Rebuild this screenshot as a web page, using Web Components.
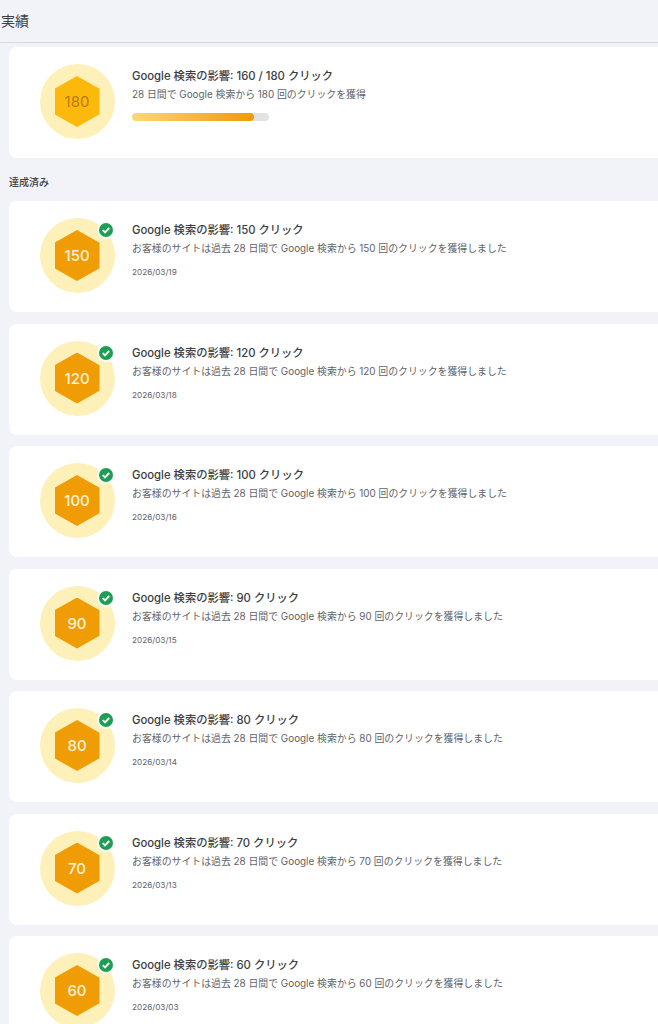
<!DOCTYPE html>
<html lang="ja">
<head>
<meta charset="utf-8">
<title>実績</title>
<style>
  html, body {
    margin: 0;
    background: #f1f3f9;
    overflow: hidden;
    font-family: "Inter", "Noto Sans CJK JP", sans-serif;
  }
</style>
</head>
<body>
<achievements-page></achievements-page>

<script>
(function () {
  const DONE = [
    ["150", "2026/03/19"],
    ["120", "2026/03/18"],
    ["100", "2026/03/16"],
    ["90", "2026/03/15"],
    ["80", "2026/03/14"],
    ["70", "2026/03/13"],
    ["60", "2026/03/03"],
  ];

  class AchievementBadge extends HTMLElement {
    connectedCallback() {
      const value = this.getAttribute("value");
      const current = this.hasAttribute("current");
      this.attachShadow({ mode: "open" });
      this.shadowRoot.innerHTML = `
        <style>
        :host{
            display:flex;
            flex:none;
            position:relative;
            width:75px;
            height:75px;
            border-radius:50%;
            background:#fdf0b8;
            align-items:center;
            justify-content:center;
        }
        .hex{
            width:45px;
            height:51px;
            display:flex;
            align-items:center;
            justify-content:center;
            clip-path:polygon(50% 0,100% 25%,100% 75%,50% 100%,0 75%,0 25%);
            background:${current ? "#fdb90b" : "#f09c05"};
            color:${current ? "#bb7a12" : "#fdf3d6"};
            font-size:15px;
            font-weight:${current ? 400 : 500};
            margin-right:1px;
        }
        .check{
            position:absolute;
            top:3px;
            right:0;
        }
        </style>
        <div class="hex">${value}</div>
        ${current ? "" : `
        <svg class="check" width="18" height="18" viewBox="0 0 18 18">
            <circle cx="9" cy="9" r="9" fill="#fff"/>
            <circle cx="9" cy="9" r="7" fill="#1e9e54"/>
            <path d="M5.8 9.2l2.2 2.2 4.2-4.4" fill="none" stroke="#fff" stroke-width="1.9"/>
        </svg>`}
      `;
    }
  }

  class AchievementCard extends HTMLElement {
    connectedCallback() {
      this.attachShadow({ mode: "open" });
      this.shadowRoot.innerHTML = `
        <style>
        :host{
            display:flex;
            align-items:flex-start;
            gap:17px;
            height:111px;
            box-sizing:border-box;
            padding:17px 0 0 31px;
            margin-right:-12px;
            background:#fff;
            border-radius:8px;
        }
        .text{
            display:flex;
            flex-direction:column;
            padding-top:3px;
        }
        </style>
        <achievement-badge
            value="${this.getAttribute("value")}"
            ${this.hasAttribute("current") ? "current" : ""}></achievement-badge>
        <div class="text"><slot></slot></div>
      `;
    }
  }

  class CardTitle extends HTMLElement {
    connectedCallback() {
      this.attachShadow({ mode: "open" });
      this.shadowRoot.innerHTML = `
        <style>
        :host{
            display:block;
            font-size:11.3px;
            font-weight:500;
            line-height:18px;
            color:#3c4043;
            white-space:nowrap;
        }
        </style>
        <slot></slot>
      `;
    }
  }

  class CardText extends HTMLElement {
    connectedCallback() {
      this.attachShadow({ mode: "open" });
      this.shadowRoot.innerHTML = `
        <style>
        :host{
            display:block;
            font-size:9.9px;
            line-height:18px;
            color:#5f6368;
            white-space:nowrap;
        }
        :host([date]){
            font-size:8.2px;
            line-height:12px;
            margin-top:9px;
        }
        </style>
        <slot></slot>
      `;
    }
  }

  class ProgressBar extends HTMLElement {
    connectedCallback() {
      this.attachShadow({ mode: "open" });
      this.shadowRoot.innerHTML = `
        <style>
        :host{
            display:block;
            width:137px;
            height:8px;
            margin-top:10px;
            border-radius:4px;
            background:#e3e3e3;
            overflow:hidden;
        }
        .fill{
            height:100%;
            border-radius:4px;
            background:linear-gradient(90deg,#fdd877,#ee9a08);
            width:${this.getAttribute("percent")}%;
        }
        </style>
        <div class="fill"></div>
      `;
    }
  }

  class AchievementsPage extends HTMLElement {
    connectedCallback() {
      this.attachShadow({ mode: "open" });

      let cards = "";
      DONE.forEach((row) => {
        cards += `
            <achievement-card value="${row[0]}">
                <card-title>Google 検索の影響: ${row[0]} クリック</card-title>
                <card-text>お客様のサイトは過去 28 日間で Google 検索から ${row[0]} 回のクリックを獲得しました</card-text>
                <card-text date>${row[1]}</card-text>
            </achievement-card>
        `;
      });

      this.shadowRoot.innerHTML = `
        <style>
        :host{
            display:block;
            width:658px;
            height:1024px;
            overflow:hidden;
        }
        header{
            height:39px;
            display:flex;
            align-items:center;
            padding:0 0 3px 1px;
            font-size:14px;
            color:#3c4043;
            border-bottom:1px solid #d5d8e2;
        }
        main{
            display:flex;
            flex-direction:column;
            padding:4px 0 0 9px;
        }
        .label{
            font-size:10px;
            font-weight:500;
            line-height:14px;
            color:#3c4043;
            margin:17px 0 12px;
        }
        .list{
            display:flex;
            flex-direction:column;
            gap:11.5px;
        }
        </style>
        <header>実績</header>
        <main>
            <achievement-card value="180" current>
                <card-title>Google 検索の影響: 160 / 180 クリック</card-title>
                <card-text>28 日間で Google 検索から 180 回のクリックを獲得</card-text>
                <progress-bar percent="89"></progress-bar>
            </achievement-card>
            <div class="label">達成済み</div>
            <div class="list">${cards}</div>
        </main>
      `;
    }
  }

  customElements.define("achievement-badge", AchievementBadge);
  customElements.define("achievement-card", AchievementCard);
  customElements.define("card-title", CardTitle);
  customElements.define("card-text", CardText);
  customElements.define("progress-bar", ProgressBar);
  customElements.define("achievements-page", AchievementsPage);
})();
</script>
</body>
</html>
